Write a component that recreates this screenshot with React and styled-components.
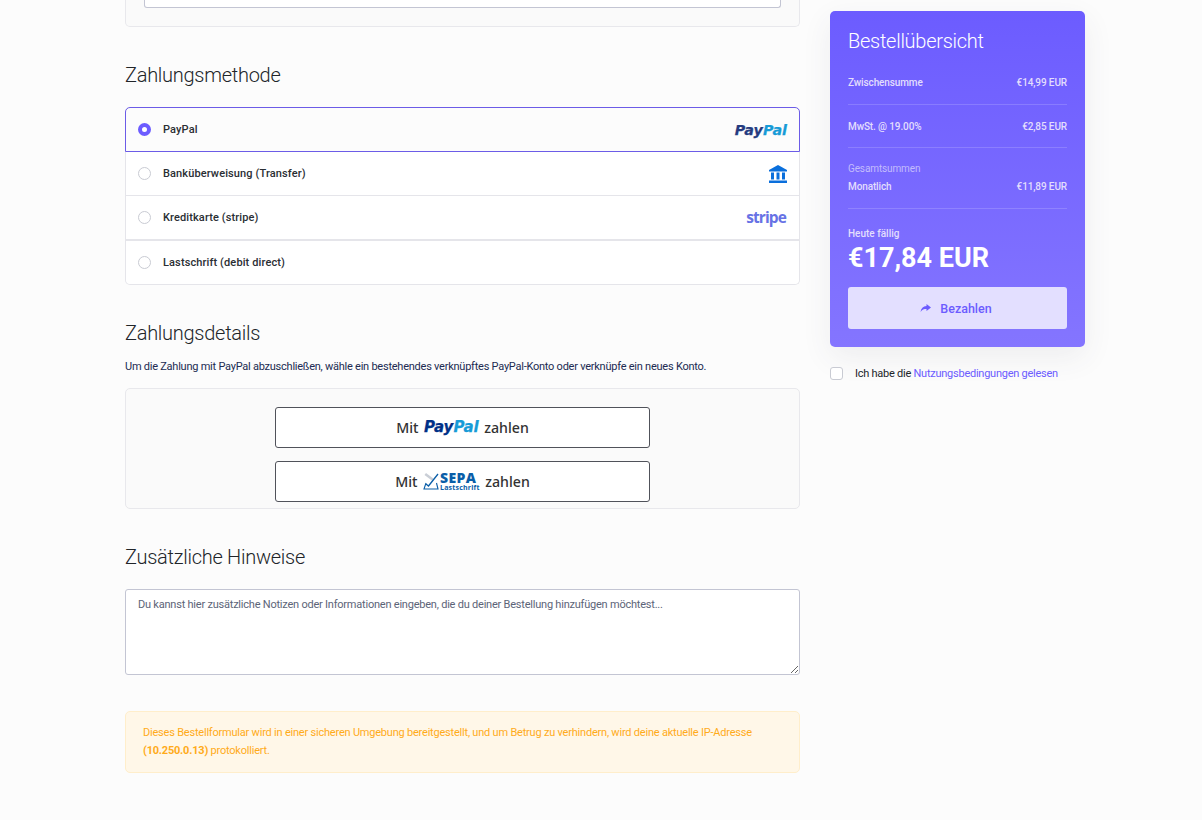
import React from "react";
import styled, { createGlobalStyle } from "styled-components";

const GlobalStyle = createGlobalStyle`
  html, body {
    margin: 0;
    padding: 0;
    background: #fcfcfc;
    font-family: Roboto, "Liberation Sans", sans-serif;
    color: #212529;
    overflow: hidden;
  }
  * {
    box-sizing: border-box;
  }
`;

const methods = [
  { id: "paypal", label: "PayPal", logo: "paypal", active: true },
  { id: "bank", label: "Banküberweisung (Transfer)", logo: "bank" },
  { id: "stripe", label: "Kreditkarte (stripe)", logo: "stripe" },
  { id: "debit", label: "Lastschrift (debit direct)" },
];

const BankIcon = () => (
  <svg width="18" height="18" viewBox="0 0 18 18" fill="#0a6fdc">
    <path d="M9 0L0 5v1.5h18V5z" />
    <path d="M2 7.5h3v7H2zM7.5 7.5h3v7h-3zM13 7.5h3v7h-3z" />
    <path d="M0 15.5h18V18H0z" />
  </svg>
);

const ArrowIcon = () => (
  <svg width="11" height="8" viewBox="0 0 11 8" fill="currentColor">
    <path d="M6.5 0L11 3.5 6.5 7V5C4 5 2 5.5.5 8 1 4.5 3 2.2 6.5 2z" />
  </svg>
);

const App = () => {
  return (
    <Page>
      <GlobalStyle />
      <LeftColumn>
        <TopCard>
          <TopInput />
        </TopCard>

        <Heading>Zahlungsmethode</Heading>
        <MethodList>
          {methods.map((m) => (
            <MethodRow key={m.id} $active={m.active} $last={m.id === "debit"}>
              <Radio $active={m.active} />
              <MethodLabel>{m.label}</MethodLabel>
              {m.logo === "paypal" && (
                <PayPalText $size={14.3}>
                  <span>Pay</span>
                  <em>Pal</em>
                </PayPalText>
              )}
              {m.logo === "bank" && <BankIcon />}
              {m.logo === "stripe" && <StripeText>stripe</StripeText>}
            </MethodRow>
          ))}
        </MethodList>

        <Heading>Zahlungsdetails</Heading>
        <Description>
          Um die Zahlung mit PayPal abzuschließen, wähle ein bestehendes
          verknüpftes PayPal-Konto oder verknüpfe ein neues Konto.
        </Description>
        <PayBox>
          <PayButton>
            Mit
            <PayPalText $size={15} $dark>
              <span>Pay</span>
              <em>Pal</em>
            </PayPalText>
            zahlen
          </PayButton>
          <PayButton>
            Mit
            <SepaLogo>
              <svg width="16" height="18" viewBox="0 0 16 18" fill="none">
                <path d="M3 1l8 6-1.5 2-8-6z" fill="#c9ced6" />
                <path d="M3 12l2.5 2L15 2" stroke="#0a5ea8" strokeWidth="1.3" />
                <path d="M3 11l-2 6h14l-1.5-6" stroke="#0a5ea8" strokeWidth="1.1" />
              </svg>
              <SepaText>
                <b>SEPA</b>
                <small>Lastschrift</small>
              </SepaText>
            </SepaLogo>
            zahlen
          </PayButton>
        </PayBox>

        <Heading>Zusätzliche Hinweise</Heading>
        <Notes placeholder="Du kannst hier zusätzliche Notizen oder Informationen eingeben, die du deiner Bestellung hinzufügen möchtest..." />

        <Notice>
          Dieses Bestellformular wird in einer sicheren Umgebung bereitgestellt,
          und um Betrug zu verhindern, wird deine aktuelle IP-Adresse{" "}
          <b>(10.250.0.13)</b> protokolliert.
        </Notice>
      </LeftColumn>

      <RightColumn>
        <SummaryCard>
          <SummaryTitle>Bestellübersicht</SummaryTitle>
          <SummaryRow $height={44}>
            <span>Zwischensumme</span>
            <span>€14,99 EUR</span>
          </SummaryRow>
          <SummaryRow $height={43}>
            <span>MwSt. @ 19.00%</span>
            <span>€2,85 EUR</span>
          </SummaryRow>
          <TotalsBlock>
            <TotalsLabel>Gesamtsummen</TotalsLabel>
            <SummaryLine>
              <span>Monatlich</span>
              <span>€11,89 EUR</span>
            </SummaryLine>
          </TotalsBlock>
          <DueLabel>Heute fällig</DueLabel>
          <DueAmount>€17,84 EUR</DueAmount>
          <CheckoutButton>
            <ArrowIcon />
            Bezahlen
          </CheckoutButton>
        </SummaryCard>
        <TermsRow>
          <Checkbox />
          <span>
            Ich habe die <TermsLink>Nutzungsbedingungen gelesen</TermsLink>
          </span>
        </TermsRow>
      </RightColumn>
    </Page>
  );
};

export default App;

const Page = styled.div`
  width: 1202px;
  height: 820px;
  padding-left: 125px;
  display: flex;
  gap: 30px;
  align-items: flex-start;
  overflow: hidden;
`;

const LeftColumn = styled.div`
  width: 675px;
  display: flex;
  flex-direction: column;
`;

const TopCard = styled.div`
  height: 27px;
  padding: 0 18px;
  background: #fafafa;
  border: 1px solid #e8e8ec;
  border-top: 0;
  border-radius: 0 0 5px 5px;
`;

const TopInput = styled.div`
  height: 8px;
  background: #fff;
  border: 1px solid #c3c5d3;
  border-top: 0;
  border-radius: 0 0 3px 3px;
`;

const Heading = styled.h2`
  margin: 36px 0 0;
  height: 24px;
  font-size: 20px;
  line-height: 24px;
  font-weight: 300;
  letter-spacing: -0.27px;
  color: #212529;
`;

const MethodList = styled.div`
  margin-top: 20px;
  background: #fff;
  border: 1px solid #e5e5ea;
  border-top: 0;
  border-radius: 5px;
  display: flex;
  flex-direction: column;
`;

const MethodRow = styled.div`
  height: ${(p) => (p.$active ? 45 : 44)}px;
  margin: ${(p) => (p.$active ? "0 -1px" : "0")};
  padding: 0 12px;
  display: flex;
  align-items: center;
  background: ${(p) => (p.$active ? "#fcfcfc" : "#fff")};
  border: ${(p) => (p.$active ? "1px solid #6c5ce7" : "0")};
  border-top: ${(p) => (p.$last ? "1px solid #e5e5ea" : undefined)};
  border-bottom: ${(p) =>
    p.$active ? "1px solid #6c5ce7" : p.$last ? "0" : "1px solid #e5e5ea"};
  border-radius: ${(p) =>
    p.$active ? "5px 5px 0 0" : p.$last ? "0 0 5px 5px" : "0"};
`;

const Radio = styled.span`
  width: 13px;
  height: 13px;
  flex: none;
  border-radius: 50%;
  background: #fff;
  border: ${(p) => (p.$active ? "4px solid #6c5cff" : "1px solid #c9cbd3")};
`;

const MethodLabel = styled.span`
  margin-left: 12px;
  flex: 1;
  font-size: 11px;
  font-weight: 500;
  letter-spacing: 0.12px;
  color: #2a2e33;
`;

const PayPalText = styled.span`
  font-family: "DejaVu Sans", sans-serif;
  font-size: ${(p) => p.$size}px;
  font-weight: 700;
  font-style: italic;
  -webkit-text-stroke: 0.25px currentColor;
  span {
    color: ${(p) => (p.$dark ? "#003087" : "#253b80")};
  }
  em {
    color: #179bd7;
  }
`;

const StripeText = styled.span`
  margin: 0 1px 2px 0;
  font-family: "Open Sans", sans-serif;
  font-size: 15.5px;
  font-weight: 700;
  letter-spacing: -0.9px;
  color: #6772e5;
`;

const Description = styled.p`
  margin: 13px 0 0;
  height: 18px;
  font-size: 11px;
  line-height: 18px;
  letter-spacing: -0.24px;
  color: #212b52;
  white-space: nowrap;
`;

const PayBox = styled.div`
  margin-top: 12px;
  height: 121px;
  padding-top: 18px;
  background: #fafafa;
  border: 1px solid #e8e8ec;
  border-radius: 5px;
  display: flex;
  flex-direction: column;
  align-items: center;
  gap: 13px;
`;

const PayButton = styled.div`
  width: 375px;
  height: 41px;
  padding-bottom: 1px;
  background: #fff;
  border: 1px solid #50525a;
  border-radius: 3px;
  display: flex;
  align-items: center;
  justify-content: center;
  gap: 5.5px;
  font-family: "Noto Sans", sans-serif;
  font-size: 14.2px;
  font-weight: 500;
  color: #333;
`;

const SepaLogo = styled.span`
  display: flex;
  align-items: center;
  gap: 1px;
`;

const SepaText = styled.span`
  display: flex;
  flex-direction: column;
  color: #0a5ea8;
  font-family: "Open Sans", sans-serif;
  b {
    font-size: 14px;
    font-weight: 800;
    letter-spacing: 0.4px;
    line-height: 12px;
  }
  small {
    font-size: 7px;
    font-weight: 700;
    line-height: 7px;
    letter-spacing: 0.2px;
  }
`;

const Notes = styled.textarea`
  display: block;
  margin-top: 20px;
  width: 675px;
  height: 86px;
  padding: 7px 12px;
  background: #fff;
  border: 1px solid #c3c5d3;
  border-radius: 3px;
  font-family: inherit;
  font-size: 11px;
  line-height: 16px;
  letter-spacing: -0.22px;
  outline: 0;
  &::placeholder {
    color: #5c6478;
    opacity: 1;
  }
`;

const Notice = styled.div`
  margin-top: 36px;
  height: 62px;
  padding: 12px 17px;
  background: #fff7e8;
  border: 1px solid #ffeecb;
  border-radius: 5px;
  font-size: 11px;
  line-height: 18px;
  letter-spacing: -0.21px;
  color: #ffab1a;
  b {
    font-weight: 700;
  }
`;

const RightColumn = styled.div`
  width: 255px;
  padding-top: 11px;
  display: flex;
  flex-direction: column;
`;

const SummaryCard = styled.div`
  height: 336px;
  padding: 18px;
  border-radius: 5px;
  background: linear-gradient(180deg, #6c5cff 0%, #8475ff 100%);
  box-shadow: 0 10px 30px rgba(60, 60, 90, 0.08);
  color: #fff;
`;

const SummaryTitle = styled.div`
  height: 24px;
  margin-bottom: 8px;
  font-size: 20px;
  line-height: 24px;
  font-weight: 300;
  letter-spacing: -0.27px;
`;

const SummaryLine = styled.div`
  display: flex;
  justify-content: space-between;
  font-size: 10px;
  font-weight: 500;
  letter-spacing: -0.12px;
  color: #e3defd;
`;

const SummaryRow = styled(SummaryLine)`
  height: ${(p) => p.$height}px;
  align-items: center;
  border-bottom: 1px solid rgba(255, 255, 255, 0.16);
`;

const TotalsBlock = styled.div`
  height: 61px;
  padding-top: 15px;
  border-bottom: 1px solid rgba(255, 255, 255, 0.16);
`;

const TotalsLabel = styled.div`
  height: 12px;
  margin-bottom: 6px;
  font-size: 10px;
  line-height: 12px;
  letter-spacing: -0.12px;
  color: #c3bcfd;
`;

const DueLabel = styled.div`
  margin-top: 19px;
  font-size: 10px;
  line-height: 12px;
  font-weight: 500;
  color: #e3defd;
`;

const DueAmount = styled.div`
  margin-top: 2px;
  font-size: 27px;
  line-height: 32px;
  font-weight: 700;
`;

const CheckoutButton = styled.div`
  margin-top: 13px;
  height: 42px;
  padding-right: 3px;
  border-radius: 3px;
  background: #e3dfff;
  color: #6c5cff;
  font-size: 12.5px;
  font-weight: 500;
  display: flex;
  align-items: center;
  justify-content: center;
  gap: 9px;
`;

const TermsRow = styled.div`
  margin-top: 20px;
  display: flex;
  align-items: center;
  gap: 12px;
  font-size: 11px;
  letter-spacing: -0.25px;
  color: #212529;
`;

const Checkbox = styled.span`
  width: 13px;
  height: 13px;
  background: #fff;
  border: 1px solid #c9cbd3;
  border-radius: 3px;
`;

const TermsLink = styled.span`
  color: #6c5cff;
`;
